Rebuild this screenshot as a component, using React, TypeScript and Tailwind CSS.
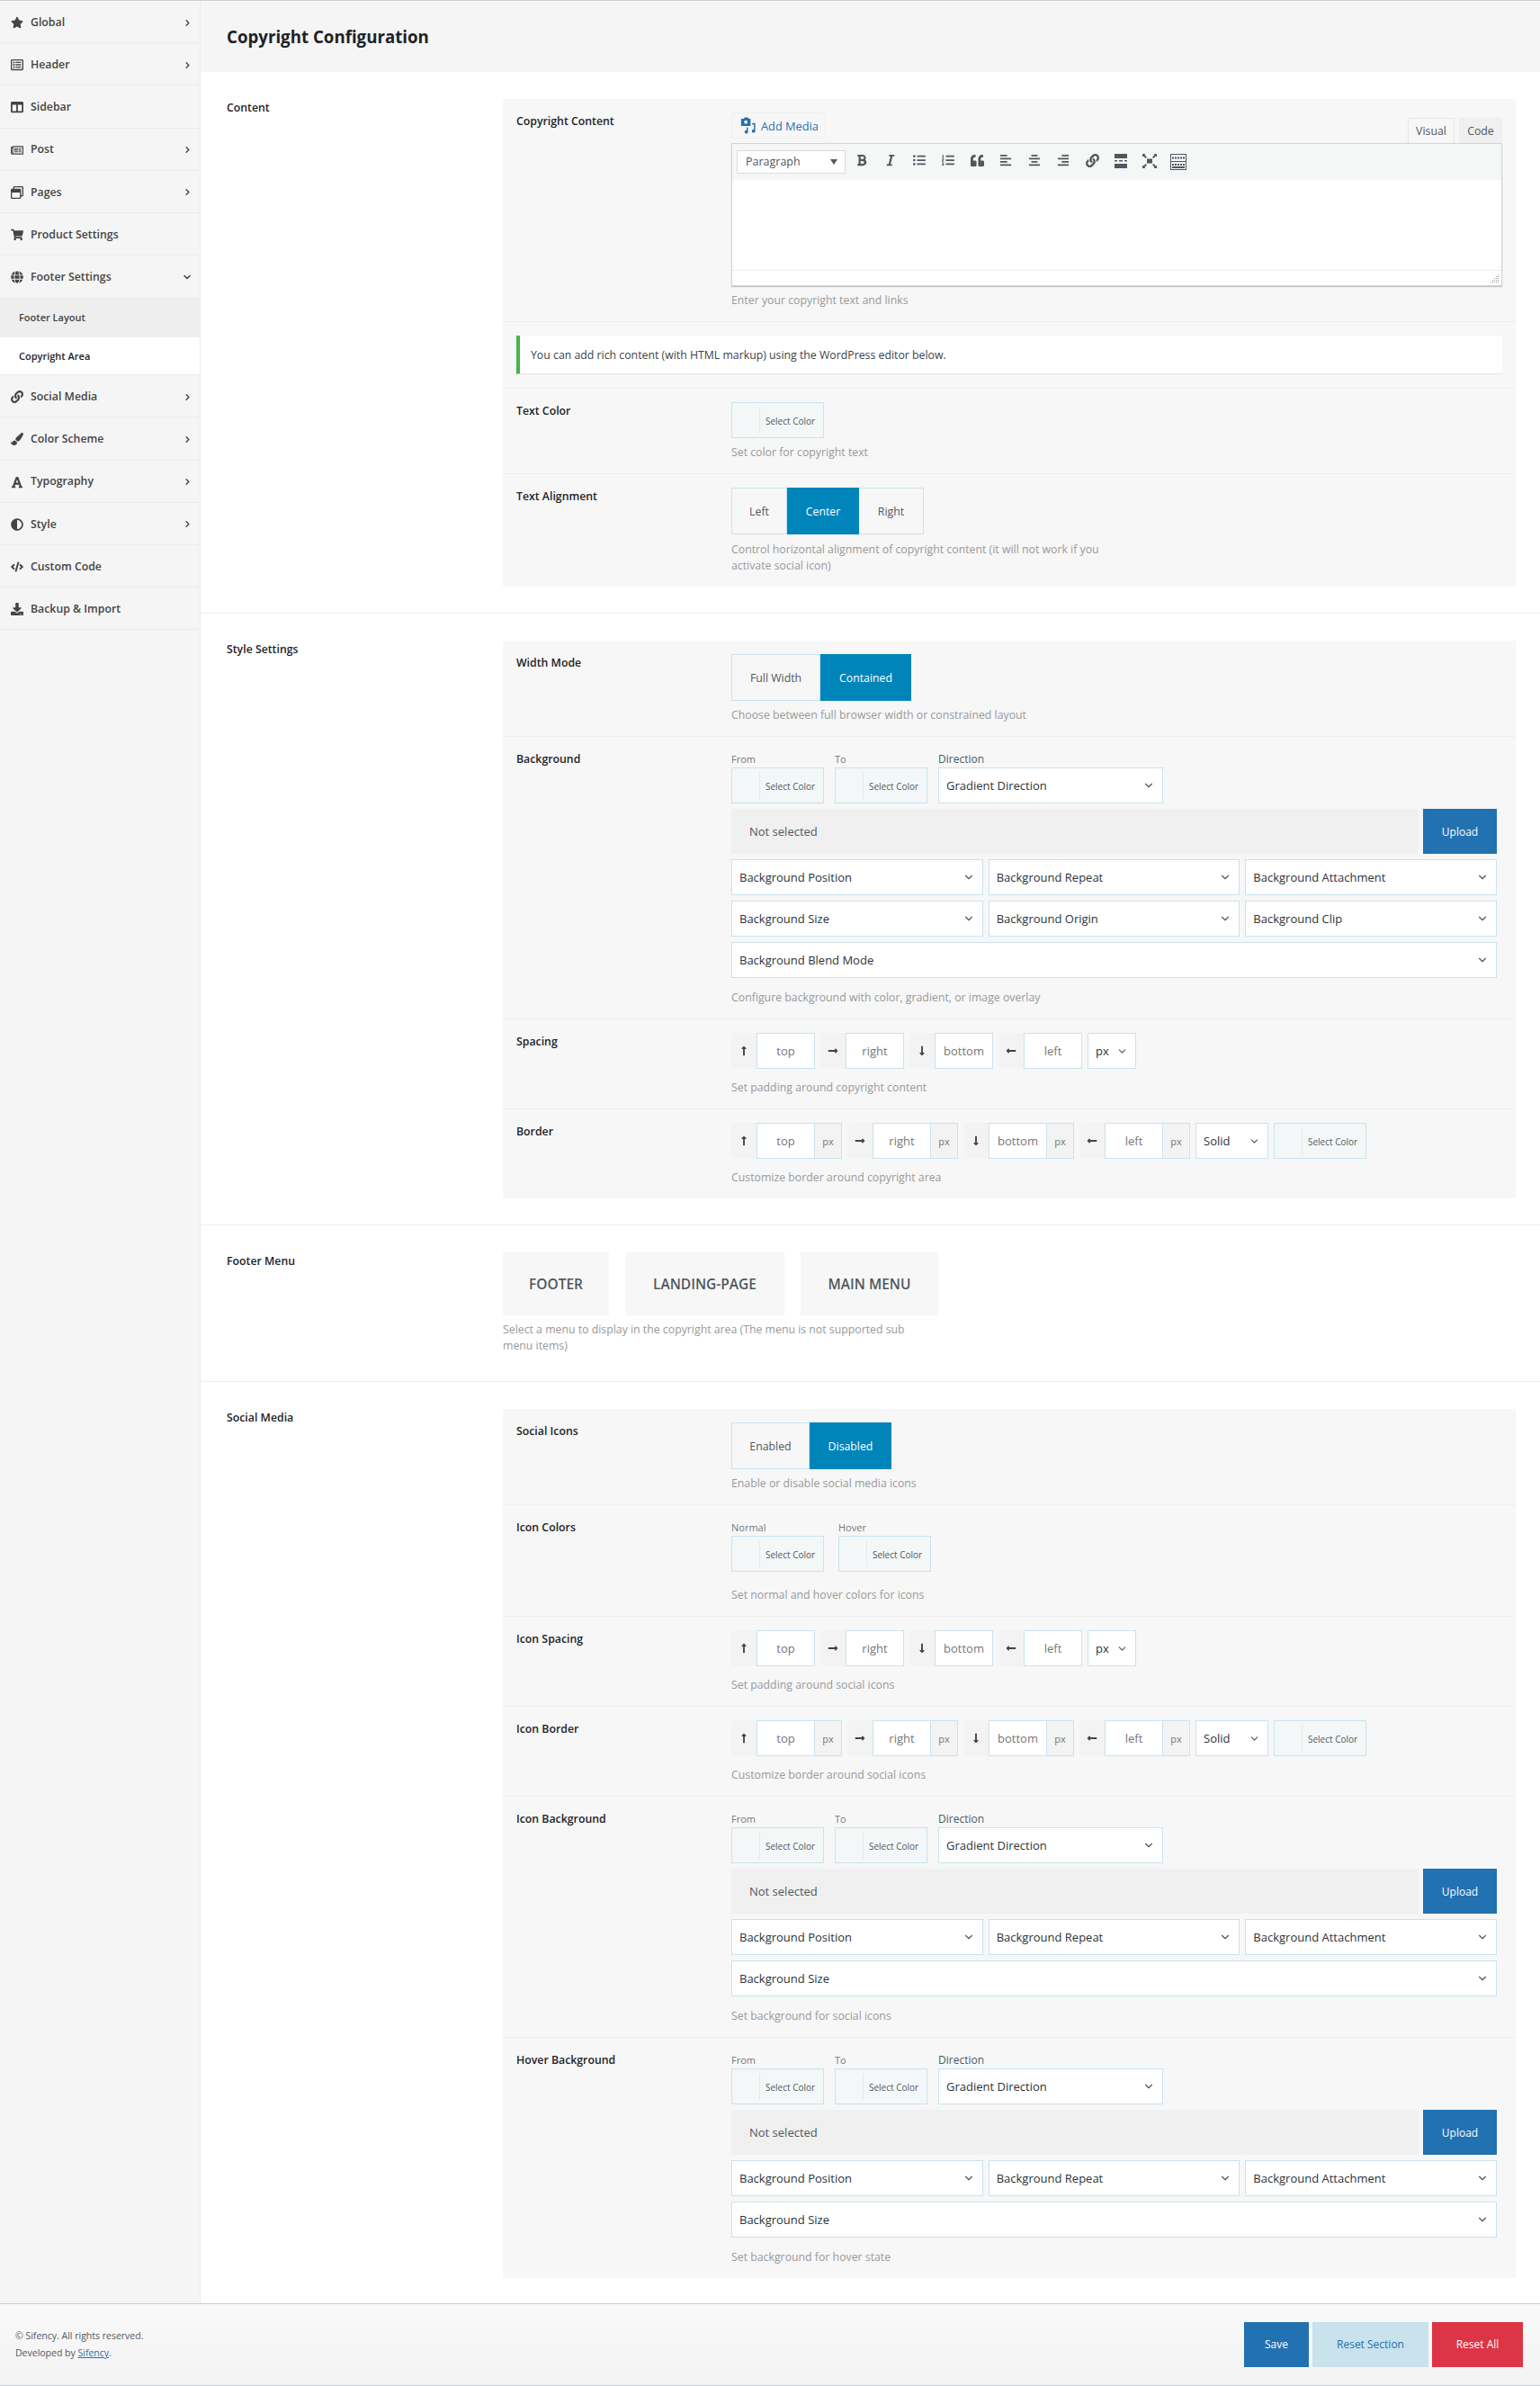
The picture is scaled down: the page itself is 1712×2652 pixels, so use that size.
import type { ReactNode } from "react"
import { ChevronDown, ChevronRight } from "lucide-react"
import {
  FaAdjust,
  FaAlignCenter,
  FaAlignLeft,
  FaAlignRight,
  FaBold,
  FaCode,
  FaColumns,
  FaDownload,
  FaFont,
  FaGlobe,
  FaItalic,
  FaLink,
  FaListOl,
  FaListUl,
  FaLongArrowAltDown,
  FaLongArrowAltLeft,
  FaLongArrowAltRight,
  FaLongArrowAltUp,
  FaPaintBrush,
  FaQuoteLeft,
  FaRegListAlt,
  FaRegNewspaper,
  FaRegWindowRestore,
  FaShoppingCart,
  FaStar,
} from "react-icons/fa"

const navTop = [
  { label: "Global", icon: FaStar, arrow: true },
  { label: "Header", icon: FaRegListAlt, arrow: true },
  { label: "Sidebar", icon: FaColumns, arrow: false },
  { label: "Post", icon: FaRegNewspaper, arrow: true },
  { label: "Pages", icon: FaRegWindowRestore, arrow: true },
  { label: "Product Settings", icon: FaShoppingCart, arrow: false },
]

const navBottom = [
  { label: "Social Media", icon: FaLink, arrow: true },
  { label: "Color Scheme", icon: FaPaintBrush, arrow: true },
  { label: "Typography", icon: FaFont, arrow: true },
  { label: "Style", icon: FaAdjust, arrow: true },
  { label: "Custom Code", icon: FaCode, arrow: false },
  { label: "Backup & Import", icon: FaDownload, arrow: false },
]

type NavEntry = (typeof navTop)[number]

function NavItem({ item }: { item: NavEntry }) {
  const Icon = item.icon
  return (
    <div className="flex h-[47.2px] items-center border-b border-[#ececec] pt-0.5 pr-2 pl-3 text-[#444]">
      <span className="flex w-[22px] shrink-0">
        <Icon size={14} />
      </span>
      <span className="flex-1 text-[12.3px] font-semibold">{item.label}</span>
      {item.arrow && <ChevronRight size={11} strokeWidth={3} />}
    </div>
  )
}

function Sidebar() {
  return (
    <aside className="w-[223px] shrink-0 border-r border-[#ececec] bg-[#f5f5f5]">
      {navTop.map((item) => (
        <NavItem key={item.label} item={item} />
      ))}
      <div className="flex h-[46px] items-center pt-0.5 pr-2 pl-3 text-[#444]">
        <span className="flex w-[22px] shrink-0">
          <FaGlobe size={14} />
        </span>
        <span className="flex-1 text-[12.3px] font-semibold">Footer Settings</span>
        <ChevronDown size={12} strokeWidth={3} />
      </div>
      <div className="flex h-[45px] items-center bg-[#eeeeee] pt-0.5 pl-[21px] text-[11px] font-semibold text-[#444]">
        Footer Layout
      </div>
      <div className="flex h-[42px] items-center border-b border-[#ececec] bg-white pt-0.5 pl-[21px] text-[11px] font-semibold text-[#1d2327]">
        Copyright Area
      </div>
      {navBottom.map((item) => (
        <NavItem key={item.label} item={item} />
      ))}
    </aside>
  )
}

function Help({ children }: { children: ReactNode }) {
  return <p className="max-w-[450px] translate-y-px pt-1.5 text-[12.3px] leading-[18px] text-[#999]">{children}</p>
}

function Row({
  label,
  help,
  last,
  children,
}: {
  label: string
  help?: string
  last?: boolean
  children: ReactNode
}) {
  return (
    <div className={`flex px-[15px] py-[15px] ${last ? "" : "border-b border-[#eeeeee]"}`}>
      <div className="w-[239px] shrink-0 translate-y-px text-[12.3px] leading-[18px] font-semibold text-[#1d2327]">
        {label}
      </div>
      <div className="min-w-0 flex-1">
        {children}
        {help && <Help>{help}</Help>}
      </div>
    </div>
  )
}

function ColorBox() {
  return (
    <div className="flex h-10 w-[103px] items-center border border-[#c9e3ef] bg-[#f4f7f7]">
      <span className="h-[29px] w-[31px] shrink-0 border-r border-[#e6e8e8]" />
      <span className="pt-0.5 pl-1.5 text-[10px] whitespace-nowrap text-[#50575e]">Select Color</span>
    </div>
  )
}

function Select({ label, className = "" }: { label: string; className?: string }) {
  return (
    <div
      className={`flex h-10 items-center justify-between border border-[#c9e3ef] bg-white pr-2 pl-2 text-[13px] text-[#2c3338] ${className}`}
    >
      <span className="pt-0.5 whitespace-nowrap">{label}</span>
      <ChevronDown size={14} strokeWidth={2} className="shrink-0 text-[#555]" />
    </div>
  )
}

function Segmented({ options, active }: { options: { label: string; width: string }[]; active: string }) {
  return (
    <div className="flex">
      {options.map((option) => (
        <div
          key={option.label}
          className={
            option.label === active
              ? `flex h-[52px] items-center justify-center border border-[#0085ba] bg-[#0085ba] pt-0.5 text-[12.3px] text-white ${option.width}`
              : `flex h-[52px] items-center justify-center border border-[#c9e3ef] bg-[#f7f7f7] pt-0.5 text-[12.3px] text-[#50575e] not-first:border-l-0 ${option.width}`
          }
        >
          {option.label}
        </div>
      ))}
    </div>
  )
}

const sides = [
  { name: "top", icon: FaLongArrowAltUp },
  { name: "right", icon: FaLongArrowAltRight },
  { name: "bottom", icon: FaLongArrowAltDown },
  { name: "left", icon: FaLongArrowAltLeft },
]

function SpacingInputs() {
  return (
    <div className="mb-[5px] flex gap-1.5">
      {sides.map((side) => (
        <div key={side.name} className="flex h-10">
          <span className="flex w-7 items-center justify-center rounded-l bg-[#f3f3f3] text-[#444]">
            <side.icon size={12} />
          </span>
          <input
            placeholder={side.name}
            className="w-[65px] border border-[#c9e3ef] bg-white pt-0.5 text-center text-[13px] placeholder:text-[#777]"
          />
        </div>
      ))}
      <div className="flex h-10 w-[54px] items-center justify-between border border-[#c9e3ef] bg-white px-2 text-[13px] text-[#2c3338]">
        <span className="pt-0.5">px</span>
        <ChevronDown size={13} strokeWidth={2} className="text-[#555]" />
      </div>
    </div>
  )
}

function BorderInputs() {
  return (
    <div className="mb-[5px] flex gap-1.5">
      {sides.map((side) => (
        <div key={side.name} className="flex h-10">
          <span className="flex w-7 items-center justify-center rounded-l bg-[#f3f3f3] text-[#444]">
            <side.icon size={12} />
          </span>
          <input
            placeholder={side.name}
            className="w-[65px] border border-[#c9e3ef] bg-white pt-0.5 text-center text-[13px] placeholder:text-[#777]"
          />
          <span className="flex w-[30px] items-center justify-center border border-l-0 border-[#c9e3ef] bg-[#f3f3f3] pt-0.5 text-[11px] text-[#777]">
            px
          </span>
        </div>
      ))}
      <div className="flex h-10 w-[81px] items-center justify-between border border-[#c9e3ef] bg-white px-2 text-[13px] text-[#2c3338]">
        <span className="pt-0.5">Solid</span>
        <ChevronDown size={13} strokeWidth={2} className="text-[#555]" />
      </div>
      <ColorBox />
    </div>
  )
}

function GradientRow() {
  return (
    <div className="flex gap-3">
      <div>
        <div className="h-[19px] text-[11px] leading-[19px] text-[#777]">From</div>
        <ColorBox />
      </div>
      <div>
        <div className="h-[19px] text-[11px] leading-[19px] text-[#777]">To</div>
        <ColorBox />
      </div>
      <div>
        <div className="h-[19px] text-xs leading-[19px] text-[#50575e]">Direction</div>
        <Select label="Gradient Direction" className="w-[250px]" />
      </div>
    </div>
  )
}

function UploadRow() {
  return (
    <div className="flex gap-[5px]">
      <div className="flex h-[50px] flex-1 items-center bg-[#f0f0f0] pt-0.5 pl-5 text-[13px] text-[#50575e]">
        Not selected
      </div>
      <div className="flex h-[50px] w-[82px] items-center justify-center bg-[#2271b1] pt-0.5 text-xs text-white">
        Upload
      </div>
    </div>
  )
}

function BackgroundFields({ blend }: { blend?: boolean }) {
  return (
    <div className="mb-1.5 flex w-[851px] flex-col gap-1.5">
      <GradientRow />
      <UploadRow />
      <div className="grid grid-cols-3 gap-1.5">
        <Select label="Background Position" />
        <Select label="Background Repeat" />
        <Select label="Background Attachment" />
        {blend ? (
          <>
            <Select label="Background Size" />
            <Select label="Background Origin" />
            <Select label="Background Clip" />
            <Select label="Background Blend Mode" className="col-span-3" />
          </>
        ) : (
          <Select label="Background Size" className="col-span-3" />
        )}
      </div>
    </div>
  )
}

function MediaIcon() {
  return (
    <svg width="19" height="19" viewBox="0 0 20 20" fill="#2271b1">
      <path d="M2 2h3l1-1.500h4l1 1.500h2v8.500H2z" />
      <circle cx="7.500" cy="6" r="2" fill="#f7f7f7" />
      <path d="M15 7h3.500v9.500a2 2 0 1 1-1.500-1.900V9H15z" />
      <path d="M8 12h2v5.500a2 2 0 1 1-1.500-1.900V12z" />
    </svg>
  )
}

function ReadMoreIcon() {
  return (
    <svg width="14" height="16" viewBox="0 0 14 16" fill="#50575e">
      <rect x="0" y="0" width="14" height="5" />
      <rect x="0" y="7" width="3" height="1.500" />
      <rect x="5" y="7" width="4" height="1.500" />
      <rect x="11" y="7" width="3" height="1.500" />
      <rect x="0" y="11" width="14" height="5" />
    </svg>
  )
}

function FullscreenIcon() {
  return (
    <svg width="16" height="16" viewBox="0 0 16 16" fill="#50575e">
      <path d="M0 0h3.500L2.400 1.100 5 3.700 3.700 5 1.100 2.400 0 3.500zM16 0v3.500l-1.100-1.100L12.300 5 11 3.700l2.600-2.600L12.500 0zM0 16v-3.500l1.100 1.100L3.700 11 5 12.300l-2.600 2.600L3.500 16zM16 16h-3.500l1.100-1.100L11 12.300l1.300-1.300 2.600 2.600 1.100-1.100z" />
      <rect x="5" y="5.500" width="6" height="5" />
    </svg>
  )
}

function KitchenSinkIcon() {
  return (
    <svg width="18" height="18" viewBox="0 0 18 18" fill="none" stroke="#50575e">
      <rect x="0.500" y="0.500" width="17" height="17" />
      <path d="M0 8.500h18" />
      <path d="M2 4.500h14M2 12h14" strokeWidth="2" strokeDasharray="2 1" />
      <path d="M2 15h14" strokeWidth="2" />
    </svg>
  )
}

const toolbar = [
  <FaBold key="bold" size={14} />,
  <FaItalic key="italic" size={14} />,
  <FaListUl key="ul" size={14} />,
  <FaListOl key="ol" size={14} />,
  <FaQuoteLeft key="quote" size={15} />,
  <FaAlignLeft key="left" size={14} />,
  <FaAlignCenter key="center" size={14} />,
  <FaAlignRight key="right" size={14} />,
  <FaLink key="link" size={15} />,
  <ReadMoreIcon key="more" />,
  <FullscreenIcon key="full" />,
  <KitchenSinkIcon key="sink" />,
]

function Editor() {
  return (
    <div>
      <div className="flex h-[34px] items-start justify-between">
        <div className="flex h-[29px] w-[105px] items-center gap-[5px] rounded-sm border border-[#eceeee] pl-2 text-[12.8px] text-[#2271b1]">
          <MediaIcon />
          <span className="pt-0.5">Add Media</span>
        </div>
        <div className="mt-1.5 flex h-7 gap-[5px] text-[12.3px] text-[#50575e]">
          <span className="flex w-[52px] items-center justify-center border border-b-0 border-[#e6e8e8] bg-[#f7f7f7] pt-0.5">
            Visual
          </span>
          <span className="flex w-12 items-center justify-center border border-b-0 border-[#eeeeee] bg-[#f0f0f0] pt-0.5">
            Code
          </span>
        </div>
      </div>
      <div className="border border-[#d2d4d4] shadow-[0_1px_1px_rgba(0,0,0,0.2)]">
        <div className="flex h-[40px] items-center bg-[#f5f7f7] pl-[5px]">
          <div className="flex h-[26px] w-[121px] items-center justify-between border border-[#dcdcde] bg-white pr-2 pl-[9px] text-[12.5px] text-[#50575e]">
            Paragraph
            <span className="h-0 w-0 border-x-4 border-t-[6px] border-x-transparent border-t-[#50575e]" />
          </div>
          <div className="ml-0.5 flex text-[#50575e]">
            {toolbar.map((icon) => (
              <span key={icon.key} className="flex w-8 justify-center">
                {icon}
              </span>
            ))}
          </div>
        </div>
        <div className="h-[100px] bg-white" />
        <div className="flex h-[17px] items-end justify-end border-t border-[#eeeeee] bg-white p-0.5">
          <svg width="10" height="10" viewBox="0 0 10 10" fill="#9a9a9a">
            <path d="M8 0h1v1H8zM6 2h1v1H6zM8 2h1v1H8zM4 4h1v1H4zM6 4h1v1H6zM8 4h1v1H8zM2 6h1v1H2zM4 6h1v1H4zM6 6h1v1H6zM8 6h1v1H8zM0 8h1v1H0zM2 8h1v1H2zM4 8h1v1H4zM6 8h1v1H6zM8 8h1v1H8z" />
          </svg>
        </div>
      </div>
    </div>
  )
}

function Section({ title, children, divider = true }: { title: string; children: ReactNode; divider?: boolean }) {
  return (
    <section className={`flex pt-[30px] pr-[27px] pb-[29px] pl-[29px] ${divider ? "border-b border-[#eeeeee]" : ""}`}>
      <h2 className="w-[307px] shrink-0 translate-y-px text-[12.3px] leading-[18px] font-semibold text-[#1d2327]">
        {title}
      </h2>
      <div className="min-w-0 flex-1">{children}</div>
    </section>
  )
}

function Panel({ children }: { children: ReactNode }) {
  return <div className="bg-[#f7f7f7]">{children}</div>
}

const footerMenus = [
  { label: "FOOTER", width: "w-[118px]" },
  { label: "LANDING-PAGE", width: "w-[177px]" },
  { label: "MAIN MENU", width: "w-[153px]" },
]

export default function App() {
  return (
    <div
      className="flex h-[2652px] flex-col border-t border-[#ccd0d4] bg-white"
      style={{ fontFamily: '"Open Sans", "Noto Sans", sans-serif' }}
    >
      <div className="flex min-h-0 flex-1">
        <Sidebar />
        <main className="min-w-0 flex-1">
          <header className="flex h-[79px] items-center bg-[#f5f5f5] pt-px pl-[29px]">
            <h1 className="text-[18.7px] font-bold text-[#1d2327]">Copyright Configuration</h1>
          </header>

          <Section title="Content">
            <Panel>
              <div className="flex border-b border-[#eeeeee] p-[15px]">
                <div className="w-[239px] shrink-0 translate-y-px text-[12.3px] leading-[18px] font-semibold text-[#1d2327]">
                  Copyright Content
                </div>
                <div className="min-w-0 flex-1">
                  <Editor />
                  <Help>Enter your copyright text and links</Help>
                </div>
              </div>
              <div className="border-b border-[#eeeeee] p-[15px]">
                <div className="flex h-[43px] items-center border-b border-l-4 border-[#e5e5e5] border-l-[#46b450] bg-white pt-0.5 pl-3 text-[12.3px] text-[#3c434a]">
                  You can add rich content (with HTML markup) using the WordPress editor below.
                </div>
              </div>
              <Row label="Text Color" help="Set color for copyright text">
                <ColorBox />
              </Row>
              <Row
                label="Text Alignment"
                help="Control horizontal alignment of copyright content (it will not work if you activate social icon)"
                last
              >
                <div className="mb-px">
                  <Segmented
                    options={[
                      { label: "Left", width: "w-[62px]" },
                      { label: "Center", width: "w-[80px]" },
                      { label: "Right", width: "w-[72px]" },
                    ]}
                    active="Center"
                  />
                </div>
              </Row>
            </Panel>
          </Section>

          <Section title="Style Settings">
            <Panel>
              <Row label="Width Mode" help="Choose between full browser width or constrained layout">
                <Segmented
                  options={[
                    { label: "Full Width", width: "w-[99px]" },
                    { label: "Contained", width: "w-[101px]" },
                  ]}
                  active="Contained"
                />
              </Row>
              <Row label="Background" help="Configure background with color, gradient, or image overlay">
                <BackgroundFields blend />
              </Row>
              <Row label="Spacing" help="Set padding around copyright content">
                <SpacingInputs />
              </Row>
              <Row label="Border" help="Customize border around copyright area" last>
                <BorderInputs />
              </Row>
            </Panel>
          </Section>

          <section className="flex border-b border-[#eeeeee] pt-[30px] pr-[27px] pb-[31px] pl-[29px]">
            <h2 className="w-[307px] shrink-0 translate-y-px text-[12.3px] leading-[18px] font-semibold text-[#1d2327]">
              Footer Menu
            </h2>
            <div>
              <div className="flex gap-[18px]">
                {footerMenus.map((menu) => (
                  <div
                    key={menu.label}
                    className={`flex h-[70px] items-center justify-center bg-[#f7f7f7] pt-0.5 text-[15.5px] font-semibold text-[#50575e] ${menu.width}`}
                  >
                    {menu.label}
                  </div>
                ))}
              </div>
              <Help>Select a menu to display in the copyright area (The menu is not supported sub menu items)</Help>
            </div>
          </section>

          <Section title="Social Media" divider={false}>
            <Panel>
              <Row label="Social Icons" help="Enable or disable social media icons">
                <Segmented
                  options={[
                    { label: "Enabled", width: "w-[87px]" },
                    { label: "Disabled", width: "w-[91px]" },
                  ]}
                  active="Disabled"
                />
              </Row>
              <Row label="Icon Colors" help="Set normal and hover colors for icons">
                <div className="mb-2.5 flex gap-4">
                  <div>
                    <div className="h-[19px] text-[11px] leading-[19px] text-[#777]">Normal</div>
                    <ColorBox />
                  </div>
                  <div>
                    <div className="h-[19px] text-[11px] leading-[19px] text-[#777]">Hover</div>
                    <ColorBox />
                  </div>
                </div>
              </Row>
              <Row label="Icon Spacing" help="Set padding around social icons">
                <SpacingInputs />
              </Row>
              <Row label="Icon Border" help="Customize border around social icons">
                <BorderInputs />
              </Row>
              <Row label="Icon Background" help="Set background for social icons">
                <BackgroundFields />
              </Row>
              <Row label="Hover Background" help="Set background for hover state" last>
                <BackgroundFields />
              </Row>
            </Panel>
          </Section>
        </main>
      </div>

      <footer className="flex h-[92px] shrink-0 items-center justify-between border-y border-[#ccd0d4] bg-gradient-to-b from-[#f9f9f9] to-[#f3f3f3] pr-[19px] pl-[17px]">
        <div className="text-[10.5px] leading-[19px] text-[#50575e]">
          <p>© Sifency. All rights reserved.</p>
          <p>
            Developed by <span className="text-[#2271b1] underline">Sifency</span>.
          </p>
        </div>
        <div className="flex gap-1 text-xs font-medium">
          <div className="flex h-[50px] w-[72px] items-center justify-center bg-[#2271b1] text-white">Save</div>
          <div className="flex h-[50px] w-[129px] items-center justify-center bg-[#c9e2ec] text-[#2271b1]">
            Reset Section
          </div>
          <div className="flex h-[50px] w-[101px] items-center justify-center bg-[#dc3545] text-white">Reset All</div>
        </div>
      </footer>
    </div>
  )
}
